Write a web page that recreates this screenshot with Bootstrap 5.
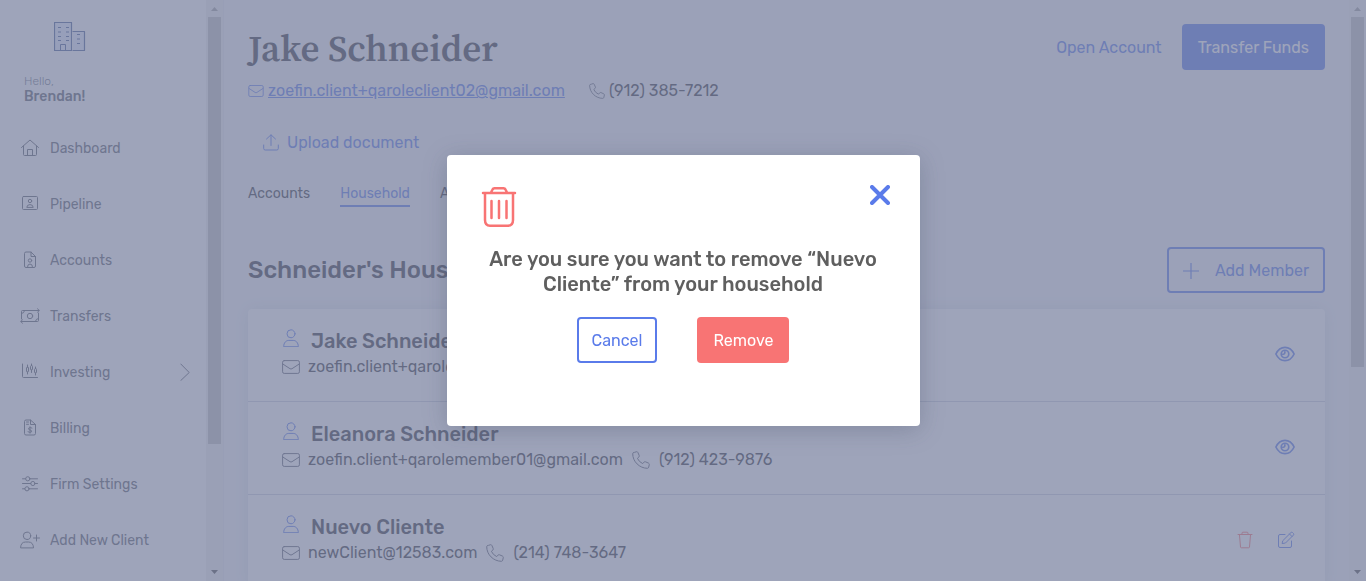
<!DOCTYPE html>
<html lang="en">
<head>
<meta charset="utf-8">
<meta name="viewport" content="width=device-width, initial-scale=1">
<title>Jake Schneider – Household</title>
<link href="https://cdn.jsdelivr.net/npm/bootstrap@5.3.0/dist/css/bootstrap.min.css" rel="stylesheet">
<style>
:root { --brand:#5a7bea; --ink:#383a41; --soft:#5c606b; --danger:#f87474; }
body { font-family:Rubik, Roboto, sans-serif; font-size:16px; color:var(--ink); background:#f4f5f8; }
svg { fill:none; stroke:currentColor; stroke-linecap:round; stroke-linejoin:round; flex:none; }
a { color:var(--brand); }
.app-shell { height:100vh; }
.side-panel { background:#fff; border-right:1px solid #e9ebf0; color:var(--soft); }
.side-inner { width:206px; }
.side-logo { margin:22px 0 22px 54px; color:#4a6299; }
.greeting { padding-left:24px; margin-bottom:15px; }
.hello { font-size:12px; line-height:15px; font-weight:300; color:#73798a; }
.user-name { font-size:14px; line-height:16px; font-weight:500; }
.side-link { height:56px; padding:0 16px 0 20px; gap:10px; font-size:14px; color:var(--soft); text-decoration:none; }
.scroll-track { width:17px; background:#f1f1f1; }
.scroll-track svg { fill:#a3a3a3; stroke:none; display:block; }
.scroll-track svg.can-move { fill:#505050; }
.scroll-thumb { width:13px; background:#c1c1c1; }
.side-thumb { height:78%; }
.page-thumb { height:64%; }
.main-area { padding:24px 24px 0; }
.client-name { font-family:"Source Serif 4", "Source Serif Pro", "Liberation Serif", serif; font-weight:600; font-size:37px; line-height:48px; }
.contact-row { line-height:24px; margin-top:7px; }
.brand-text { color:var(--brand); }
.action { height:46px; border:2px solid transparent; border-radius:4px; padding:2px 14px 0; font-size:16px; line-height:24px; --bs-btn-color:var(--brand); --bs-btn-hover-color:var(--brand); }
.action-fill { background:var(--brand); color:#fff; }
.action-line { border-color:var(--brand); color:var(--brand); }
.action-cancel { padding:2px 13px 0; }
.action-danger { background:var(--danger); color:#fff; }
.upload { margin:28px 0 0 15px; line-height:24px; font-size:16px; }
.tabs-row { gap:30px; margin-top:28px; font-size:14px; }
.tab-link { color:var(--ink); text-decoration:none; line-height:21px; padding-bottom:1px; border-bottom:2px solid transparent; }
.tab-link.active { color:var(--brand); border-color:var(--brand); }
.section-head { margin-top:40px; margin-bottom:16px; }
.section-title { font-size:24px; line-height:30px; font-weight:500; }
.members { background:#fff; border-radius:4px; box-shadow:0 0 16px rgba(40,80,120,.12); }
.member { height:93px; padding:0 30px 3px 34px; border-bottom:1px solid #ced3de; }
.member-name { font-size:20px; line-height:24px; font-weight:500; gap:11px; margin-bottom:2px; }
.member-contact { line-height:24px; }
.glyph { color:#5f6373; }
.icon-btn { background:none; border:0; padding:0; display:flex; color:var(--brand); }
.red-text { color:var(--danger); }
.veil { --bs-backdrop-bg:#767f9e; --bs-backdrop-opacity:.71; }
.confirm-dialog { --bs-modal-width:473px; }
.confirm-box { border:0; border-radius:4px; padding:30px 30px 63px; box-shadow:0 4px 24px rgba(50,58,85,.25); }
.confirm-text { font-size:20px; line-height:25px; font-weight:500; color:#5f5f5f; margin:20px 0; }
.confirm-actions { gap:40px; }
</style>
</head>
<body class="overflow-hidden">
<svg class="d-none">
  <symbol id="mail" viewBox="0 0 18 14"><rect x=".6" y=".6" width="16.8" height="12.8" rx="1.6"/><path d="M.8 4 8 8.700Q9 9.300 10 8.700L17.200 4"/></symbol>
  <symbol id="phone" viewBox="0 0 18 18"><path d="M3 1.200 4.600.700Q5.500.600 5.900 1.500L7.200 4.500Q7.500 5.300 6.900 6L5.400 7.300Q7 10.900 10.700 12.600L12 11.100Q12.600 10.500 13.500 10.800L16.500 12.100Q17.400 12.600 17.300 13.500L16.700 16.200Q16.400 17.300 15.400 17.300C7.500 17.200.700 10.700.700 2.600Q.700 1.700 1.700 1.500Z"/></symbol>
  <symbol id="person" viewBox="0 0 16 18"><circle cx="8" cy="4.800" r="4"/><path d="M.7 17.300C.7 13.500 3.200 11.400 5.800 11.400H10.200C12.800 11.400 15.300 13.500 15.300 17.300Z"/></symbol>
  <symbol id="eye" viewBox="0 0 18 14"><path d="M.8 7C2.500 3.400 5.400 1 9 1s6.500 2.400 8.200 6C15.500 10.600 12.600 13 9 13S2.500 10.600.8 7Z"/><circle cx="9" cy="7" r="3.400"/><path d="M7 7.200Q9 7.500 8.900 5"/></symbol>
  <symbol id="arrow-up" viewBox="0 0 17 17"><path d="M5 11 8.500 7 12 11Z"/></symbol>
  <symbol id="arrow-down" viewBox="0 0 17 17"><path d="M5 6 8.500 10 12 6Z"/></symbol>
</svg>

<div class="app-shell d-flex">
  <aside class="side-panel d-flex flex-shrink-0">
    <div class="side-inner overflow-hidden">
      <svg class="side-logo d-block" width="32" height="30" viewBox="0 0 32 30"><path d="M.5.500H17.500V28.500H.5ZM19 9.500H30.500V28.500H19" stroke-width="1.200" fill="#e6edff"/><path d="M6.500 28V22.500H11.500V28"/><path d="M4 5.500H7M12 5.500H15M4 10H7M12 10H15M4 14.500H7M12 14.500H15M4 18.500H7M12 18.500H15M23 12.500H26M23 17H26M23 21.500H26" stroke-linecap="butt"/></svg>
      <div class="greeting"><div class="hello">Hello,</div><div class="user-name">Brendan!</div></div>
      <nav class="d-flex flex-column">
        <a href="#" class="side-link d-flex align-items-center"><svg width="20" height="18" viewBox="0 0 20 18"><path d="M1.500 8.500 10 1 18.500 8.500M3.500 7V15.500Q3.500 16.500 4.500 16.500H15.500Q16.500 16.500 16.500 15.500V7M7.500 16.500V10.500H12.500V16.500"/></svg>Dashboard</a>
        <a href="#" class="side-link d-flex align-items-center"><svg width="20" height="18" viewBox="0 0 20 18"><rect x="2.500" y="1.500" width="15" height="13" rx="1"/><circle cx="10" cy="6" r="1.700"/><path d="M6.800 12Q7 9.600 10 9.600T13.200 12Z"/></svg>Pipeline</a>
        <a href="#" class="side-link d-flex align-items-center"><svg width="20" height="18" viewBox="0 0 20 18"><path d="M11 1H6Q4.500 1 4.500 2.500V15Q4.500 16.500 6 16.500H14Q15.500 16.500 15.500 15V5.500L11 1V5.500H15.500M7.500 16Q7.500 13 10 13T12.500 16"/><circle cx="10" cy="9.500" r="1.700"/></svg>Accounts</a>
        <a href="#" class="side-link d-flex align-items-center"><svg width="20" height="18" viewBox="0 0 20 18"><path d="M1.500 12V4.500Q1.500 3.500 2.500 3.500H19M17.500 1.800 19.300 3.500 17.500 5.200M18.500 6V13.500Q18.500 14.500 17.500 14.500H1M2.500 12.800.7 14.500 2.500 16.200M1.500 6.500Q4 6.500 4.500 4M18.500 11.500Q16 11.500 15.500 14"/><circle cx="10" cy="9" r="2.700"/></svg>Transfers</a>
        <a href="#" class="side-link d-flex align-items-center"><svg width="20" height="18" viewBox="0 0 20 18"><path d="M2.500 1V13.500Q2.500 14.500 3.500 14.500H17.500M7.500 2V4M7.500 9V11M11.500 1V2.500M11.500 7V9.500M15.500 4V5.500M15.500 10V12"/><rect x="6.500" y="4" width="2" height="5" rx="1"/><rect x="10.500" y="2.500" width="2" height="4.500" rx="1"/><rect x="14.500" y="5.500" width="2" height="4.500" rx="1"/></svg>Investing<svg class="ms-auto" width="10" height="18" viewBox="0 0 10 18"><path d="M.8 1 9.200 9.500.8 17.500"/></svg></a>
        <a href="#" class="side-link d-flex align-items-center"><svg width="20" height="18" viewBox="0 0 20 18"><path d="M10.500 1H6Q4.500 1 4.500 2.500V14.500Q4.500 16 6 16H14Q15.500 16 15.500 14.500V5.500L10.500 1V5.500H15.500M6.500 3H8.500M6.500 5.300H8.500M12 9Q10 8 8.600 9.200 8.300 10.800 10 11 12 11.300 11.600 12.800 10 14 8 12.800M10 7.700V14.200"/></svg>Billing</a>
        <a href="#" class="side-link d-flex align-items-center"><svg width="20" height="18" viewBox="0 0 20 18"><path d="M2.500 3.800H5.500M10 3.800H17.500M2.500 8.500H10.700M15.200 8.500H17.500M2.500 13.800H4.700M9.200 13.800H17.500"/><circle cx="7.800" cy="3.800" r="2.100"/><circle cx="12.900" cy="8.500" r="2.100"/><circle cx="7" cy="13.800" r="2.100"/></svg>Firm Settings</a>
        <a href="#" class="side-link d-flex align-items-center"><svg width="20" height="18" viewBox="0 0 20 18"><circle cx="7" cy="4.800" r="3.700"/><path d="M.6 16.500Q.8 11 5.500 11H8.500Q13.200 11 13.500 16.500ZM13.500 7H19.500M16.500 4V10"/></svg>Add New Client</a>
      </nav>
    </div>
    <div class="scroll-track d-flex flex-column align-items-center">
      <svg width="17" height="17"><use href="#arrow-up"/></svg>
      <div class="flex-grow-1"><div class="scroll-thumb side-thumb"></div></div>
      <svg class="can-move" width="17" height="17"><use href="#arrow-down"/></svg>
    </div>
  </aside>

  <main class="main-area flex-grow-1 overflow-hidden">
    <header class="d-flex justify-content-between align-items-start">
      <h1 class="client-name mb-0">Jake Schneider</h1>
      <div class="d-flex gap-1">
        <button type="button" class="btn action brand-text">Open Account</button>
        <button type="button" class="btn action action-fill">Transfer Funds</button>
      </div>
    </header>
    <div class="contact-row d-flex align-items-center gap-4">
      <span class="d-flex align-items-center gap-1 brand-text"><svg width="16" height="12"><use href="#mail"/></svg><a href="#">zoefin.client+qaroleclient02@gmail.com</a></span>
      <span class="d-flex align-items-center gap-1"><svg class="glyph" width="16" height="16"><use href="#phone"/></svg>(912) 385-7212</span>
    </div>
    <button type="button" class="upload icon-btn align-items-center gap-2"><svg width="16" height="18" viewBox="0 0 16 18"><path d="M8 11.500V1M3.500 5 8 .800 12.500 5M.7 11V14.500Q.7 16 2.200 16H13.800Q15.300 16 15.300 14.500V11"/></svg>Upload document</button>
    <nav class="tabs-row d-flex">
      <a href="#" class="tab-link">Accounts</a>
      <a href="#" class="tab-link active">Household</a>
      <a href="#" class="tab-link">Activity</a>
    </nav>
    <div class="section-head d-flex justify-content-between align-items-center">
      <h2 class="section-title mb-0">Schneider's Household</h2>
      <button type="button" class="btn action action-line d-flex align-items-center gap-3"><svg width="16" height="16" viewBox="0 0 16 16"><path d="M8 0V16M0 8H16" stroke-width="1.200"/></svg>Add Member</button>
    </div>
    <section class="members">
      <div class="member d-flex align-items-center justify-content-between">
        <div>
          <div class="member-name d-flex"><svg class="brand-text" width="18" height="18"><use href="#person"/></svg>Jake Schneider</div>
          <div class="member-contact d-flex align-items-center gap-2"><svg class="glyph" width="18" height="14"><use href="#mail"/></svg>zoefin.client+qaroleclient02@gmail.com</div>
        </div>
        <button type="button" class="icon-btn" aria-label="View Jake Schneider"><svg width="20" height="16" stroke-width="1.500"><use href="#eye"/></svg></button>
      </div>
      <div class="member d-flex align-items-center justify-content-between">
        <div>
          <div class="member-name d-flex"><svg class="brand-text" width="18" height="18"><use href="#person"/></svg>Eleanora Schneider</div>
          <div class="member-contact d-flex align-items-center gap-2"><svg class="glyph" width="18" height="14"><use href="#mail"/></svg>zoefin.client+qarolemember01@gmail.com<svg class="glyph" width="20" height="18"><use href="#phone"/></svg>(912) 423-9876</div>
        </div>
        <button type="button" class="icon-btn" aria-label="View Eleanora Schneider"><svg width="20" height="16" stroke-width="1.500"><use href="#eye"/></svg></button>
      </div>
      <div class="member d-flex align-items-center justify-content-between">
        <div>
          <div class="member-name d-flex"><svg class="brand-text" width="18" height="18"><use href="#person"/></svg>Nuevo Cliente</div>
          <div class="member-contact d-flex align-items-center gap-2"><svg class="glyph" width="18" height="14"><use href="#mail"/></svg>newClient@12583.com<svg class="glyph" width="20" height="18"><use href="#phone"/></svg>(214) 748-3647</div>
        </div>
        <div class="d-flex gap-4">
          <button type="button" class="icon-btn red-text" aria-label="Remove Nuevo Cliente"><svg width="16" height="18" viewBox="0 0 16 18"><path d="M1 3.500H15M5 3V2Q5 1.200 6 1.200H10Q11 1.200 11 2V3M2.500 4 3.500 16Q3.600 16.800 4.400 16.800H11.600Q12.400 16.800 12.500 16L13.500 4"/></svg></button>
          <button type="button" class="icon-btn" aria-label="Edit Nuevo Cliente"><svg width="18" height="18" viewBox="0 0 18 18"><path d="M8 3.500H3Q1.500 3.500 1.500 5V15Q1.500 16.500 3 16.500H13Q14.500 16.500 14.500 15V10M6 9.500 14 1.500Q14.800.900 15.500 1.500L16.500 2.500Q17.100 3.200 16.500 4L8.500 12 5.500 12.500ZM12.500 3 15 5.500"/></svg></button>
        </div>
      </div>
    </section>
  </main>

  <div class="scroll-track d-flex flex-column align-items-center flex-shrink-0">
    <svg width="17" height="17"><use href="#arrow-up"/></svg>
    <div class="flex-grow-1"><div class="scroll-thumb page-thumb"></div></div>
    <svg class="can-move" width="17" height="17"><use href="#arrow-down"/></svg>
  </div>
</div>

<div class="modal-backdrop veil show"></div>
<div class="modal d-block" tabindex="-1" role="dialog" aria-modal="true" aria-labelledby="confirm-title">
  <div class="modal-dialog modal-dialog-centered confirm-dialog">
    <div class="modal-content confirm-box">
      <div class="d-flex justify-content-between align-items-start">
        <svg class="ms-1 red-text" width="36" height="42" viewBox="0 -2 36 42" stroke-width="2.500"><path d="M2 6H34M10 5.500 11.500 2.500Q12 1.200 13.500 1.200H22.500Q24 1.200 24.500 2.500L26 5.500M4 6.500V33Q4 38.700 9 38.700H27Q32 38.700 32 33V6.500"/><path d="M10.500 14V31M18 14V31M25.500 14V31" stroke-width="2.500"/></svg>
        <button type="button" class="icon-btn" aria-label="Close"><svg width="20" height="20" viewBox="0 0 20 20" stroke-width="4"><path d="M2 2 18 18M18 2 2 18"/></svg></button>
      </div>
      <h2 class="confirm-text text-center" id="confirm-title">Are you sure you want to remove “Nuevo Cliente” from your household</h2>
      <div class="d-flex justify-content-center confirm-actions">
        <button type="button" class="btn action action-line action-cancel">Cancel</button>
        <button type="button" class="btn action action-danger">Remove</button>
      </div>
    </div>
  </div>
</div>
<script src="https://cdn.jsdelivr.net/npm/bootstrap@5.3.0/dist/js/bootstrap.bundle.min.js"></script>
</body>
</html>
